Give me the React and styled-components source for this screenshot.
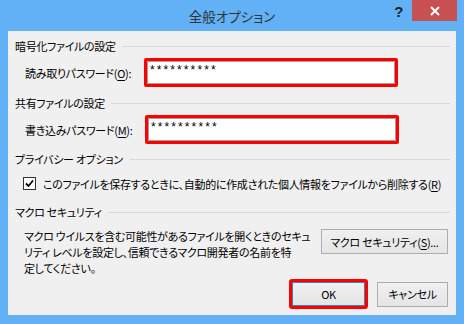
import React from 'react';
import styled, { createGlobalStyle } from 'styled-components';

const GlobalStyle = createGlobalStyle`
  html, body {
    margin: 0;
    padding: 0;
    background: #62b1f6;
  }
  body {
    font-family: "Noto Sans CJK JP", "Noto Sans", sans-serif;
    font-size: 11px;
    letter-spacing: -0.3px;
    color: #000;
    font-feature-settings: "palt";
  }
`;

const Window = styled.div`
  width: 464px;
  height: 324px;
  background: #62b1f6;
  display: flex;
  flex-direction: column;
  overflow: hidden;
`;

const TitleBar = styled.div`
  height: 31px;
  display: grid;
  grid-template-columns: 1fr auto 1fr;
  align-items: start;
`;

const Title = styled.div`
  grid-column: 2;
  font-size: 13.5px;
  letter-spacing: 0;
  line-height: 32px;
  color: #333;
`;

const Controls = styled.div`
  grid-column: 3;
  display: flex;
  justify-content: flex-end;
  align-items: flex-start;
  padding-right: 7px;
`;

const Help = styled.div`
  font-family: "Liberation Sans", sans-serif;
  font-weight: bold;
  font-size: 15px;
  line-height: 23px;
  color: #222;
  margin-right: 9px;
`;

const Close = styled.div`
  width: 45px;
  height: 21px;
  background: #c75050;
  display: flex;
  align-items: center;
  justify-content: center;
`;

const Client = styled.div`
  flex: 1;
  margin: 0 8px 9px 8px;
  background: #f0f0f0;
  padding: 7px 6px 6px 7px;
  display: flex;
  flex-direction: column;
`;

const Header = styled.div`
  height: 16px;
  display: flex;
  align-items: center;
  margin-top: ${(p) => p.$top || 0}px;
  white-space: nowrap;
  &::after {
    content: '';
    flex: 1;
    height: 1px;
    background: #dadada;
    margin-left: 6px;
  }
`;

const FieldRow = styled.div`
  display: flex;
  align-items: center;
  margin-top: ${(p) => p.$top || 0}px;
  padding-left: 10px;
`;

const Label = styled.div`
  width: ${(p) => p.$w}px;
  white-space: nowrap;
`;

const Highlight = styled.div`
  border: 3px solid #f00;
  border-radius: 2px;
  display: flex;
`;

const Input = styled.div`
  width: ${(p) => p.$w}px;
  height: 21px;
  background: #fff;
  border: 1px solid #a0a0a0;
  font-family: "Liberation Sans", sans-serif;
  font-size: 12px;
  letter-spacing: 2.1px;
  line-height: 17px;
  padding-left: 2px;
`;

const Underline = styled.span`
  text-decoration: underline;
  text-underline-offset: 2px;
`;

const CheckRow = styled.div`
  display: flex;
  align-items: center;
  margin-top: 8px;
  margin-left: 8px;
  height: 17px;
  white-space: nowrap;
`;

const Box = styled.div`
  width: 11px;
  height: 11px;
  border: 1px solid #333;
  background: #fff;
  margin-right: 7px;
  display: flex;
  align-items: center;
  justify-content: center;
`;

const MacroRow = styled.div`
  display: flex;
  justify-content: space-between;
  align-items: flex-start;
  margin-top: 8px;
`;

const Paragraph = styled.div`
  margin-left: 9px;
  line-height: 16px;
  white-space: nowrap;
`;

const Button = styled.div`
  width: ${(p) => p.$w}px;
  height: ${(p) => p.$h || 23}px;
  box-sizing: border-box;
  border: 1px solid ${(p) => (p.$default ? '#3c7fb1' : '#acacac')};
  background: linear-gradient(#f0f0f0, #e5e5e5);
  display: flex;
  align-items: center;
  justify-content: center;
  white-space: nowrap;
  margin-right: ${(p) => p.$mr || 0}px;
  margin-top: ${(p) => p.$mt || 0}px;
`;

const Footer = styled.div`
  margin-top: auto;
  display: flex;
  justify-content: flex-end;
  align-items: center;
  gap: 9px;
  padding-right: 2px;
`;

const OkHighlight = styled.div`
  border: 3px solid #f00;
  border-radius: 3px;
  display: flex;
`;

export default function App() {
  return (
    <>
      <GlobalStyle />
      <Window>
        <TitleBar>
          <Title>全般オプション</Title>
          <Controls>
            <Help>?</Help>
            <Close>
              <svg width="10" height="10" viewBox="0 0 10 10">
                <path d="M1 1L9 9M9 1L1 9" stroke="#fff" strokeWidth="2" />
              </svg>
            </Close>
          </Controls>
        </TitleBar>
        <Client>
          <Header>暗号化ファイルの設定</Header>
          <FieldRow $top={4}>
            <Label $w={119}>
              読み取りパスワード(<Underline>O</Underline>):
            </Label>
            <Highlight>
              <Input $w={244}>**********</Input>
            </Highlight>
          </FieldRow>
          <Header $top={8}>共有ファイルの設定</Header>
          <FieldRow $top={4}>
            <Label $w={120}>
              書き込みパスワード(<Underline>M</Underline>):
            </Label>
            <Highlight>
              <Input $w={244}>**********</Input>
            </Highlight>
          </FieldRow>
          <Header $top={7}>プライバシー オプション</Header>
          <CheckRow>
            <Box>
              <svg width="9" height="9" viewBox="0 0 9 9">
                <path d="M1 4.5L3.5 7L8 1.5" stroke="#000" strokeWidth="1.8" fill="none" />
              </svg>
            </Box>
            このファイルを保存するときに、自動的に作成された個人情報をファイルから削除する(<Underline>R</Underline>)
          </CheckRow>
          <Header $top={12}>マクロ セキュリティ</Header>
          <MacroRow>
            <Paragraph>
              マクロ ウイルスを含む可能性があるファイルを開くときのセキュ
              <br />
              リティ レベルを設定し、信頼できるマクロ開発者の名前を特
              <br />
              定してください。
            </Paragraph>
            <Button $w={127} $h={25} $mr={2} $mt={1}>
              マクロ セキュリティ(<Underline>S</Underline>)...
            </Button>
          </MacroRow>
          <Footer>
            <OkHighlight>
              <Button $w={73} $h={24} $default>
                OK
              </Button>
            </OkHighlight>
            <Button $w={71} $h={25}>キャンセル</Button>
          </Footer>
        </Client>
      </Window>
    </>
  );
}
